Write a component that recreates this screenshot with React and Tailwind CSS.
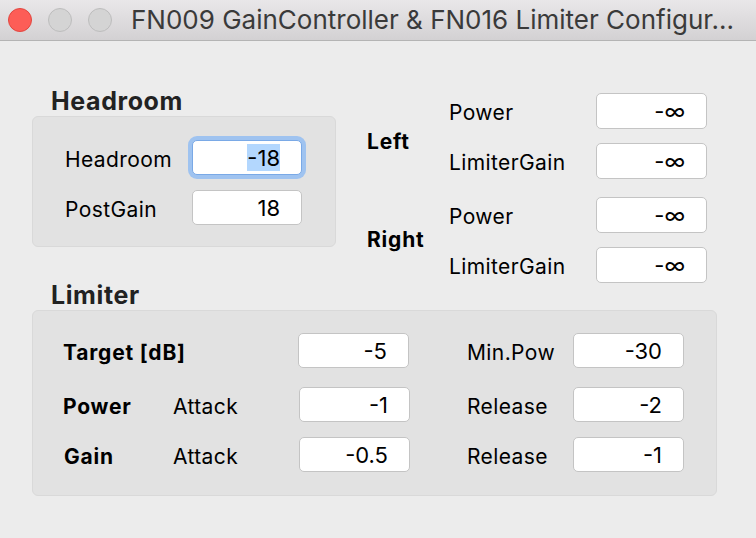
import React from "react";

const font = { fontFamily: "Inter, 'Liberation Sans', sans-serif" };

function Field({ value, focused, w = "w-[111px]", h = "h-[35px]" }) {
  return (
    <div
      className={
        "flex items-center justify-end rounded-[5px] bg-white pr-[21px] text-[22px] leading-none text-black " +
        w +
        " " +
        h +
        " " +
        (focused
          ? "border border-[#7aa9e6] shadow-[0_0_0_4px_#9fc3f0]"
          : "border border-[#c4c4c4]")
      }
    >
      {focused ? (
        <span className="flex h-[27px] items-center bg-[#b3d7fe]">{value}</span>
      ) : (
        <span>{value}</span>
      )}
    </div>
  );
}

function Light({ red }) {
  return (
    <div
      className={
        "h-[24px] w-[24px] rounded-full border " +
        (red ? "border-[#e2463f] bg-[#fd5d57]" : "border-[#bdbdbd] bg-[#d4d4d4]")
      }
    />
  );
}

const lbl = "pt-[3px] text-[21px] leading-none tracking-[0.4px]";
const blbl = "text-[21px] font-bold leading-none tracking-[0.8px]";

export default function App() {
  return (
    <div style={font} className="h-[538px] w-[756px] overflow-hidden bg-[#ececec] text-black">
      {/* title bar */}
      <div className="flex h-[41px] items-center border-b border-[#b4b4b4] bg-gradient-to-b from-[#e9e7e9] to-[#d3d1d3] pl-[8px]">
        <div className="flex gap-[16px]">
          <Light red />
          <Light />
          <Light />
        </div>
        <div className="ml-[19px] whitespace-nowrap text-[26px] leading-none text-[#3a3a3a]">
          FN009 GainController &amp; FN016 Limiter Configur...
        </div>
      </div>

      <div className="pl-[32px]">
        {/* top section */}
        <div className="mt-[48px] flex items-start">
          <div className="flex w-[304px] flex-col">
            <div className="ml-[19px] text-[25px] font-bold leading-[24px] tracking-[0.6px] text-[#222]">Headroom</div>
            <div className="mt-[3px] flex h-[131px] flex-col gap-[15px] rounded-[6px] border border-[#d9d9d9] bg-[#e2e2e2] pl-[32px] pt-[23px]">
              <div className="flex items-center">
                <div className={"w-[127px] " + lbl}>Headroom</div>
                <Field value="-18" focused w="w-[110px]" />
              </div>
              <div className="flex items-center">
                <div className={"w-[127px] " + lbl}>PostGain</div>
                <Field value="18" w="w-[110px]" />
              </div>
            </div>
          </div>

          <div className="ml-[31px] mt-[4px] flex flex-col gap-[18px]">
            {["Left", "Right"].map((side) => (
              <div key={side} className="flex items-center">
                <div className={"w-[82px] " + blbl + (side === "Left" ? " pt-[10px]" : " pb-[1px]")}>{side}</div>
                <div className="flex flex-col gap-[14px]">
                  {["Power", "LimiterGain"].map((l) => (
                    <div key={l} className="flex items-center">
                      <div className={"w-[147px] " + lbl}>{l}</div>
                      <Field value="-∞" h="h-[36px]" />
                    </div>
                  ))}
                </div>
              </div>
            ))}
          </div>
        </div>

        {/* limiter */}
        <div className="ml-[19px] text-[25px] font-bold leading-[24px] tracking-[0.6px] text-[#222]">Limiter</div>
        <div className="mt-[3px] flex h-[186px] w-[685px] flex-col rounded-[6px] border border-[#d9d9d9] bg-[#e2e2e2] pl-[30px] pt-[22px]">
          <div className="flex items-center">
            <div className={"w-[235px] pt-[3px] " + blbl}>Target [dB]</div>
            <Field value="-5" />
            <div className={"ml-[58px] w-[106px] " + lbl}>Min.Pow</div>
            <Field value="-30" />
          </div>
          <div className="mt-[19px] flex items-center">
            <div className={"w-[110px] pt-[3px] " + blbl}>Power</div>
            <div className={"w-[126px] " + lbl}>Attack</div>
            <Field value="-1" />
            <div className={"ml-[57px] w-[106px] " + lbl}>Release</div>
            <Field value="-2" />
          </div>
          <div className="mt-[15px] flex items-center">
            <div className={"w-[110px] pl-[1px] pt-[3px] " + blbl}>Gain</div>
            <div className={"w-[126px] " + lbl}>Attack</div>
            <Field value="-0.5" />
            <div className={"ml-[57px] w-[106px] " + lbl}>Release</div>
            <Field value="-1" />
          </div>
        </div>
      </div>
    </div>
  );
}
